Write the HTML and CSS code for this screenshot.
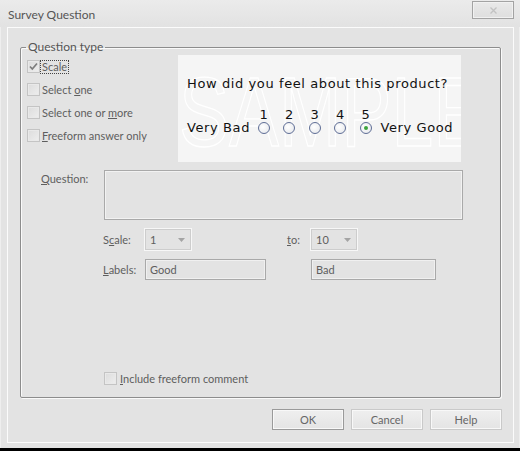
FILE: index.html
```html
<!DOCTYPE html>
<html>
<head>
<meta charset="utf-8">
<link rel="stylesheet" href="styles.css">
</head>
<body>
<div class="window">
  <div class="titlebar">
    <span class="title">Survey Question</span>
    <span class="close">
      <svg width="7" height="7" viewBox="0 0 7 7"><path d="M0.5 0.5 L6.5 6.5 M6.5 0.5 L0.5 6.5" stroke="#c2c2c2" stroke-width="1.3" fill="none"/></svg>
    </span>
  </div>
  <div class="client">
    <fieldset class="group">
      <legend class="legend">Question type</legend>
      <div class="top">
        <div class="types">
          <div class="check-row">
            <span class="box"><svg width="11" height="11" viewBox="0 0 11 11"><path d="M2 5.5 L4.3 8 L9 2.5" stroke="#7d7d7d" stroke-width="1.7" fill="none"/></svg></span>
            <span class="focus">Scale</span>
          </div>
          <div class="check-row"><span class="box"></span><span class="lbl">Select <u>o</u>ne</span></div>
          <div class="check-row"><span class="box"></span><span class="lbl">Select one or <u>m</u>ore</span></div>
          <div class="check-row"><span class="box"></span><span class="lbl"><u>F</u>reeform answer only</span></div>
        </div>
        <div class="preview">
          <div class="watermark" aria-hidden="true">SAMPLE</div>
          <div class="ptitle">How did you feel about this product?</div>
          <div class="scale-row">
            <span class="end end-left">Very Bad</span>
            <span class="opt"><span class="num">1</span><span class="radio"></span></span>
            <span class="opt"><span class="num">2</span><span class="radio"></span></span>
            <span class="opt"><span class="num">3</span><span class="radio"></span></span>
            <span class="opt"><span class="num">4</span><span class="radio"></span></span>
            <span class="opt"><span class="num">5</span><span class="radio on"></span></span>
            <span class="end end-right">Very Good</span>
          </div>
        </div>
      </div>
      <div class="question-row">
        <span class="qlabel"><u>Q</u>uestion:</span>
        <div class="textarea"></div>
      </div>
      <div class="fields">
        <span class="flabel">S<u>c</u>ale:</span>
        <span class="select"><span>1</span><svg width="7" height="4" viewBox="0 0 7 4"><polygon points="0,0 7,0 3.5,4" fill="#a4a4a4"/></svg></span>
        <span class="spacer"></span>
        <span class="flabel"><u>t</u>o:</span>
        <span class="select"><span>10</span><svg width="7" height="4" viewBox="0 0 7 4"><polygon points="0,0 7,0 3.5,4" fill="#a4a4a4"/></svg></span>

        <span class="flabel"><u>L</u>abels:</span>
        <span class="input wide1">Good</span>
        <span class="spacer"></span>
        <span class="spacer"></span>
        <span class="input wide2">Bad</span>
      </div>
      <div class="comment-row">
        <span class="box"></span><span class="lbl"><u>I</u>nclude freeform comment</span>
      </div>
    </fieldset>
    <div class="buttons">
      <span class="btn default">OK</span>
      <span class="btn">Cancel</span>
      <span class="btn">Help</span>
    </div>
  </div>
</div>
</body>
</html>
```
FILE: styles.css
```css
html, body {
  margin: 0;
  padding: 0;
}
body {
  width: 520px;
  height: 451px;
  background: #000;
  overflow: hidden;
  font-family: Lato, "Liberation Sans", sans-serif;
  font-size: 11px;
  color: #5e5e5e;
}
u { text-decoration: underline; text-underline-offset: 1px; }

.window {
  height: 448px;
  background: #e3e3e3;
  display: flex;
  flex-direction: column;
  box-shadow: inset 1px 0 0 #eeeeee, inset -1px 0 0 #eeeeee;
}

.titlebar {
  height: 27px;
  display: flex;
  justify-content: space-between;
  align-items: flex-start;
  background: linear-gradient(#ebebeb, #e2e2e2);
}
.title {
  margin: 7px 0 0 8px;
  line-height: 16px;
  font-size: 12px;
  color: #555;
}
.close {
  margin: 1px 6px 0 0;
  width: 40px;
  height: 16px;
  border: 1px solid #a3a3a3;
  box-shadow: inset 0 0 0 1px #f1f1f1;
  background: linear-gradient(#e9e9e9, #dedede);
  display: flex;
  align-items: center;
  justify-content: center;
}

.client {
  margin: 0 6px 0 7px;
  height: 414px;
  border: 1px solid #fbfbfb;
  display: flex;
  flex-direction: column;
}

.group {
  margin: 11px 12px 0 12px;
  padding: 0 0 12px 0;
  border: 1px solid #8d8d8d;
  border-radius: 2px;
  box-shadow: 1px 1px 0 #fafafa, inset 1px 1px 0 #fafafa;
  min-width: 0;
}
.legend {
  margin-left: 5px;
  padding: 0 2px;
  line-height: 16px;
  font-size: 12px;
  color: #555;
}

.top {
  display: flex;
}
.types {
  width: 157px;
  display: flex;
  flex-direction: column;
}
.check-row {
  height: 23px;
  display: flex;
  align-items: center;
  padding-left: 6px;
}
.box {
  width: 11px;
  height: 11px;
  border: 1px solid #c4c4c4;
  background: linear-gradient(135deg, #dcdcdc, #eeeeee);
  box-shadow: inset 0 0 0 1px #e9e9e9;
  display: flex;
  align-items: center;
  justify-content: center;
  flex: none;
}
.focus {
  margin-left: 1px;
  padding: 0 1px;
  line-height: 12px;
  outline: 1px dotted #444;
}
.lbl {
  margin-left: 2px;
}

.preview {
  position: relative;
  width: 283px;
  height: 107px;
  background: #f5f5f5;
  overflow: hidden;
  font-family: "DejaVu Sans", Verdana, sans-serif;
  font-size: 13px;
  letter-spacing: 0.6px;
  color: #111;
  box-sizing: border-box;
  padding: 21px 0 0 9px;
}
.watermark {
  position: absolute;
  left: 1px;
  top: 9px;
  font-family: "Liberation Sans", Arial, sans-serif;
  font-size: 75px;
  line-height: 75px;
  letter-spacing: 0;
  color: transparent;
  -webkit-text-stroke: 1px #ffffff;
  transform: scaleY(1.3);
  transform-origin: left top;
}
.ptitle {
  position: relative;
  line-height: 16px;
}
.scale-row {
  position: relative;
  margin-top: 15px;
  display: flex;
  align-items: flex-end;
}
.end {
  line-height: 16px;
}
.end-left {
  margin-right: 1px;
}
.end-right {
  margin-left: 2px;
}
.opt {
  width: 25.5px;
  display: flex;
  flex-direction: column;
  align-items: center;
}
.num {
  line-height: 15px;
  letter-spacing: 0;
}
.radio {
  width: 10px;
  height: 10px;
  border: 1px solid #5f6e96;
  border-radius: 50%;
  background: radial-gradient(circle at 40% 40%, #ffffff, #e4e6ea);
  margin-bottom: 2px;
  display: flex;
  align-items: center;
  justify-content: center;
}
.radio.on::after {
  content: "";
  width: 4px;
  height: 4px;
  border-radius: 50%;
  background: #3da33d;
}

.question-row {
  margin-top: 8px;
  display: flex;
  align-items: flex-start;
}
.qlabel {
  width: 63px;
  padding-left: 20px;
  margin-top: 2px;
  line-height: 14px;
}
.textarea {
  width: 357px;
  height: 48px;
  border: 1px solid #a9a9a9;
  box-shadow: inset 0 0 0 1px #f2f2f2;
}

.fields {
  margin-top: 9px;
  padding-left: 82px;
  display: grid;
  grid-template-columns: 42px 120px 22px 24px 125px;
  grid-auto-rows: 21px;
  row-gap: 9px;
  align-items: center;
}
.flabel {
  line-height: 14px;
}
.select {
  width: 35px;
  height: 19px;
  border: 1px solid #cdcdcd;
  box-shadow: 0 0 0 1px #f7f7f7;
  display: flex;
  align-items: center;
  justify-content: space-between;
  padding: 0 5px 0 4px;
}
.input {
  height: 19px;
  border: 1px solid #a9a9a9;
  box-shadow: inset 0 0 0 1px #f0f0f0;
  padding-left: 4px;
  display: flex;
  align-items: center;
}
.wide1 { width: 115px; }
.wide2 { width: 119px; }

.comment-row {
  margin-top: 92px;
  padding-left: 83px;
  display: flex;
  align-items: center;
  height: 13px;
}
.comment-row .lbl { margin-left: 3px; }

.buttons {
  margin: 11px 11px 0 0;
  display: flex;
  justify-content: flex-end;
  gap: 7px;
}
.btn {
  width: 70px;
  height: 19px;
  border: 1px solid #c9c9c9;
  box-shadow: inset 0 0 0 1px #f8f8f8;
  background: linear-gradient(#efefef, #e4e4e4);
  display: flex;
  align-items: center;
  justify-content: center;
  color: #666;
}
.btn.default {
  border-color: #9a9a9a;
}
```
